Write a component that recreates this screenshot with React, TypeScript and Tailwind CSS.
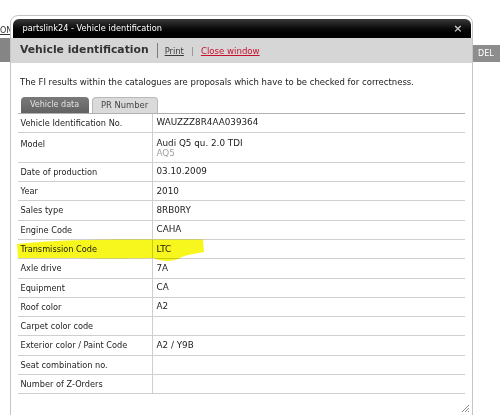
import React from "react";

type Row = { label: string; value?: string; sub?: string };

const rows: Row[] = [
	{ label: "Vehicle Identification No.", value: "WAUZZZ8R4AA039364" },
	{ label: "Model", value: "Audi Q5 qu. 2.0 TDI", sub: "AQ5" },
	{ label: "Date of production", value: "03.10.2009" },
	{ label: "Year", value: "2010" },
	{ label: "Sales type", value: "8RB0RY" },
	{ label: "Engine Code", value: "CAHA" },
	{ label: "Transmission Code", value: "LTC" },
	{ label: "Axle drive", value: "7A" },
	{ label: "Equipment", value: "CA" },
	{ label: "Roof color", value: "A2" },
	{ label: "Carpet color code" },
	{ label: "Exterior color / Paint Code", value: "A2 / Y9B" },
	{ label: "Seat combination no." },
	{ label: "Number of Z-Orders" },
];

const DataRow: React.FC<{ row: Row }> = ({ row }) => {
	if (row.sub) {
		return (
			<div className="flex h-[30px] border-b border-[#cfcfcf]">
				<div className="w-[135px] shrink-0 border-r border-[#cfcfcf] pl-[2.5px] pt-[5px]">
					{row.label}
				</div>
				<div className="pl-[3.5px] pt-[5px] text-[8.8px] leading-[10px]">
					<div>{row.value}</div>
					<div className="text-[#a0a0a0]">{row.sub}</div>
				</div>
			</div>
		);
	}
	return (
		<div className="flex h-[19.3px] items-center border-b border-[#cfcfcf]">
			<div className="flex h-full w-[135px] shrink-0 items-center border-r border-[#cfcfcf] pl-[2.5px]">
				{row.label}
			</div>
			<div className="pl-[3.5px] text-[8.8px]">{row.value}</div>
		</div>
	);
};

const App: React.FC = () => {
	return (
		<div className="relative h-[415px] w-[500px] overflow-hidden bg-white font-['DejaVu_Sans',Verdana,sans-serif]">
			{/* page behind the popup */}
			<div className="pt-[26px]">
				<span className="block text-[8px] leading-[9px] text-[#333] underline">ON</span>
				<div className="mt-[3px] flex h-[24px] items-end justify-between">
					<div className="h-[24px] w-[10px] bg-[#858585]" />
					<div className="flex h-[17px] w-[27px] items-center bg-[#8d8d8d] pl-[5px] text-[8px] text-white">
						DEL
					</div>
				</div>
			</div>

			{/* popup */}
			<div className="absolute left-[10px] top-[15px] h-[402px] w-[463px] rounded-t-[8px] border border-[#c4c4c4] bg-white">
				<div className="mx-[1.5px] mt-[3px] flex h-[18.5px] items-center justify-between rounded-t-[6px] bg-gradient-to-b from-[#3a3a3a] via-[#0c0c0c] to-black pl-[10px] pr-[8px]">
					<span className="text-[8.2px] text-white">partslink24 - Vehicle identification</span>
					<span className="text-[11px] font-bold leading-none text-[#c8c8c8]">×</span>
				</div>
				<div className="flex h-[25px] items-center bg-[#d6d6d6] pl-[9px]">
					<span className="text-[10.8px] font-bold text-[#333]">Vehicle identification</span>
					<span className="ml-[8px] h-[15px] w-px bg-[#7a7a7a]" />
					<span className="ml-[7px] mt-[2px] text-[8.4px] text-[#3a3a3a] underline">Print</span>
					<span className="ml-[8px] mt-[2px] h-[9px] w-px bg-[#9a9a9a]" />
					<span className="ml-[8px] mt-[2px] text-[8.6px] text-[#c8102e] underline">Close window</span>
				</div>

				<div className="px-[7px] text-[8.2px] text-[#222]">
					<p className="pl-[2px] pt-[14px] text-[8.5px] leading-[10px] text-[#1a1a1a]">
						The FI results within the catalogues are proposals which have to be checked for correctness.
					</p>
					<div className="mt-[10px] flex items-end pl-[2.5px]">
						<div className="flex h-[16px] w-[68px] items-center justify-center rounded-t-[4px] bg-gradient-to-b from-[#7a7a7a] to-[#626262] text-[8px] text-[#e2e2e2]">
							Vehicle data
						</div>
						<div className="ml-[3px] flex h-[16px] w-[66px] items-center justify-center rounded-t-[4px] border border-b-0 border-[#b8b8b8] bg-[#dadada] text-[8.4px] text-[#444]">
							PR Number
						</div>
					</div>
					<div className="relative border-t border-[#b0b0b0]">
						{rows.map((row) => (
							<DataRow key={row.label} row={row} />
						))}
						{/* marker highlight */}
						<svg
							className="pointer-events-none absolute left-[-2px] top-[125px] mix-blend-multiply"
							width="200"
							height="26"
							viewBox="0 0 200 26"
						>
							<path
								d="M1,5 C30,1 90,0 135,0.5 L187,0.5 L188,13 C178,15 170,16 166,18 C158,23 146,23 137,19 C100,20 50,19 2,19 Z"
								fill="#f7f71e"
							/>
						</svg>
					</div>
				</div>

				{/* resize grip */}
				<svg className="absolute bottom-[3px] right-[2px]" width="9" height="9" viewBox="0 0 9 9">
					<path d="M8,1 L1,8 M8,4 L4,8 M8,7 L7,8" stroke="#8a8a8a" strokeWidth="1" />
				</svg>
			</div>
		</div>
	);
};

export default App;
